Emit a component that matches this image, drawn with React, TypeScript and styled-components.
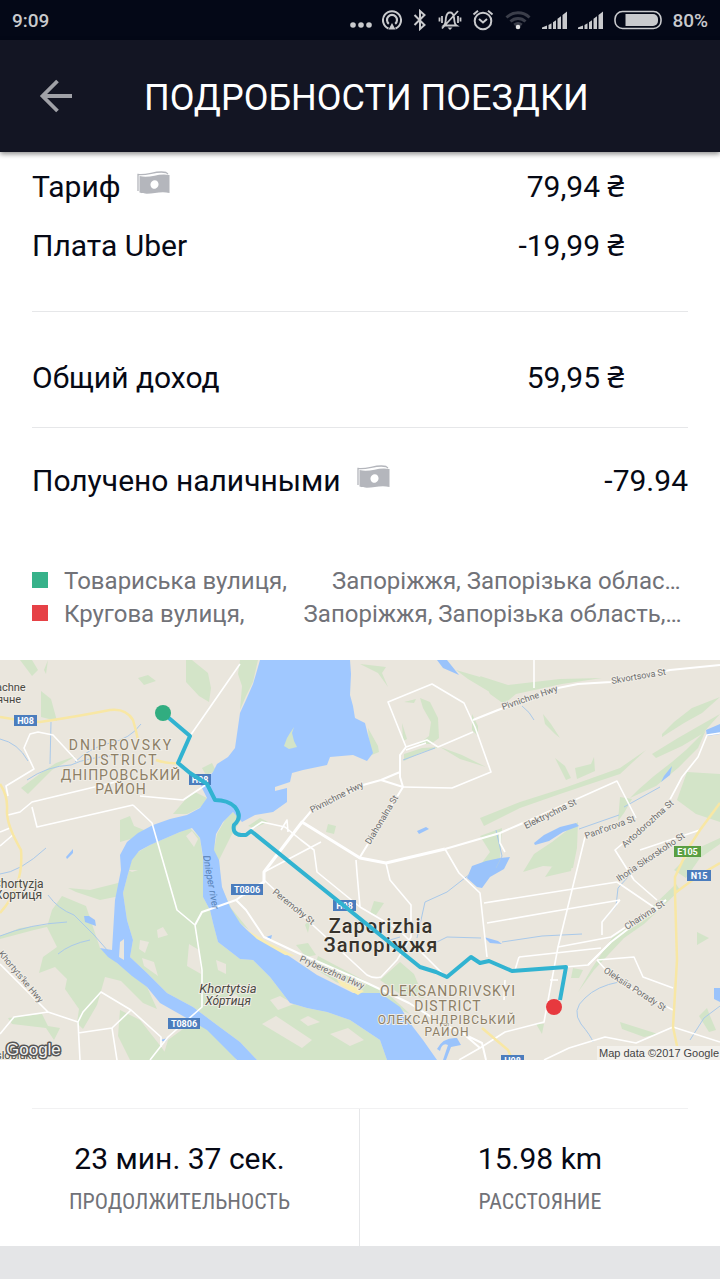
import React from 'react';
import styled, { createGlobalStyle } from 'styled-components';

const GlobalStyle = createGlobalStyle`
  *, *::before, *::after { box-sizing: border-box; }
  body {
    margin: 0;
    background: #fff;
    color: #060915;
    font-family: Roboto, "Noto Sans", sans-serif;
  }
`;

const Page = styled.div`
  display: flex;
  flex-direction: column;
`;

const StatusBar = styled.div`
  display: flex;
  align-items: center;
  justify-content: space-between;
  height: 40px;
  padding: 0 12px;
  background: #040817;
  color: #c9cacd;
  font-size: 19px;
  font-weight: 500;
`;

const StatusIcons = styled.div`
  display: flex;
  align-items: center;
  gap: 10px;
  svg { display: block; }
`;

const AppBar = styled.header`
  position: relative;
  display: flex;
  align-items: center;
  height: 112px;
  padding: 0 32px;
  background: #131523;
  color: #fff;
  box-shadow: 0 2px 5px rgba(0, 0, 0, 0.45);
`;

const BackButton = styled.button`
  display: flex;
  width: 48px;
  height: 48px;
  align-items: center;
  justify-content: center;
  padding: 0;
  border: 0;
  background: none;
  color: #a0a1a7;
`;

const Title = styled.h1`
  margin: 0 0 0 64px;
  padding-top: 4px;
  font-size: 36px;
  line-height: 48px;
  font-weight: 400;
`;

const Section = styled.section<{ $top: number; $bottom: number }>`
  display: flex;
  flex-direction: column;
  gap: 19px;
  margin: 0 32px;
  padding: ${(p) => p.$top}px 0 ${(p) => p.$bottom}px;
  & + & { border-top: 1px solid #e6e7e9; }
`;

const Row = styled.div`
  display: flex;
  align-items: center;
  justify-content: space-between;
  font-size: 30px;
  line-height: 40px;
`;

const RowLabel = styled.span`
  display: flex;
  align-items: center;
  gap: 16px;
  svg { margin-bottom: 8px; }
`;

const Amount = styled.span<{ $inset?: boolean }>`
  margin-right: ${(p) => (p.$inset ? 64 : 0)}px;
`;

const Currency = styled.span`
  font-family: "Noto Sans", sans-serif;
  line-height: 1;
`;

const Stops = styled.ul`
  display: flex;
  flex-direction: column;
  margin: 0 32px;
  padding: 0 0 29px;
  list-style: none;
`;

const Stop = styled.li<{ $color: string }>`
  display: flex;
  align-items: center;
  font-size: 24px;
  line-height: 33px;
  color: #717278;
  white-space: nowrap;
  &::before {
    content: "";
    width: 16px;
    height: 16px;
    margin: 0 16px 4px 0;
    background: ${(p) => p.$color};
  }
`;

const Street = styled.span<{ $gap: number }>`
  margin-right: ${(p) => p.$gap}px;
`;

const MapFigure = styled.figure`
  margin: 0;
  svg {
    display: block;
    width: 100%;
    height: auto;
  }
`;

const Divider = styled.hr`
  margin: 48px 32px 0;
  border: 0;
  border-top: 1px solid #f1f1f2;
`;

const Stats = styled.div`
  display: grid;
  grid-template-columns: 1fr 1fr;
`;

const Stat = styled.div`
  display: flex;
  flex-direction: column;
  align-items: center;
  height: 137px;
  padding-top: 30px;
  &:first-child { border-right: 1px solid #e6e7e9; }
`;

const StatValue = styled.span`
  font-size: 30px;
  line-height: 40px;
`;

const StatLabel = styled.span`
  font-family: "Roboto Condensed", Roboto, sans-serif;
  font-stretch: condensed;
  margin-top: 7px;
  font-size: 22px;
  line-height: 32px;
  color: #717278;
`;

const Footer = styled.footer`
  height: 33px;
  background: #e4e5e7;
`;

const MoreIcon = () => (
  <svg width="22" height="20" fill="#c9cacd"><circle cx="3" cy="15" r="2.8" /><circle cx="11" cy="15" r="2.8" /><circle cx="19" cy="15" r="2.8" /></svg>
);

const CastIcon = () => (
  <svg width="20" height="22" fill="none" stroke="#c9cacd" strokeWidth="2">
    <path d="M6.5 19.5A9 9 0 1 1 13.500 19.500" />
    <path d="M6.800 14.800A5 5 0 1 1 13.200 14.800" strokeWidth="2.200" />
    <path d="M10 14l3.500 6.500h-7z" fill="#c9cacd" stroke="none" />
  </svg>
);

const BluetoothIcon = () => (
  <svg width="16" height="22" fill="none" stroke="#c9cacd" strokeWidth="2"><path d="M2.500 6l10 10L8 20V2l4.500 4-10 10" /></svg>
);

const BellOffIcon = () => (
  <svg width="24" height="22" fill="none" stroke="#c9cacd" strokeWidth="1.800">
    <path d="M6 16.500c2-1.500 1.500-5 2-8C8.600 5 10 3.500 12 3.500s3.400 1.500 4 5c.5 3 0 6.500 2.500 8zM4 19.500L20 2M4 7v7M1.500 8.500v4M20 7v7M22.500 8.500v4" />
    <path d="M9.500 18.500h5l-2.500 2.500z" fill="#c9cacd" stroke="none" />
  </svg>
);

const AlarmIcon = () => (
  <svg width="22" height="22" fill="none" stroke="#c9cacd" strokeWidth="2">
    <circle cx="11" cy="12" r="8.300" />
    <path d="M7 10l4 3.500 4-3.500M1.500 5.500L6 1.800M20.500 5.500L16 1.800" />
  </svg>
);

const WifiIcon = () => (
  <svg width="28" height="22" fill="none" stroke="#3b3e4a" strokeWidth="3">
    <path d="M2.500 8.500a16.500 16.500 0 0 1 23 0M6.500 12.500a11 11 0 0 1 15 0M10.300 16a6 6 0 0 1 7.400 0" />
    <circle cx="14" cy="18" r="2.300" fill="#e0e0e2" stroke="none" />
  </svg>
);

const SignalIcon = () => (
  <svg width="26" height="22" fill="#c9cacd"><path d="M0 20v-1.500l5-2V20zM6.500 20v-4l3-1.800V20zM11 20v-6.800l3-2V20zM15.500 20V9.800l3.500-2.600V20zM20.500 20V6l4.500-3.500V20z" /></svg>
);

const BatteryIcon = () => (
  <svg width="48" height="20">
    <rect x="1" y="1.500" width="46" height="17" rx="7.500" fill="none" stroke="#c9cacd" strokeWidth="1.600" />
    <path d="M11.500 4H39a5 5 0 0 1 5 5v2a5 5 0 0 1-5 5H11.500z" fill="#c9cacd" />
  </svg>
);

const BackIcon = () => (
  <svg width="34" height="34" fill="none" stroke="currentColor" strokeWidth="3.800"><path d="M33 17H4M18.500 2L3.500 17l15 15" /></svg>
);

const CashIcon = () => (
  <svg width="33" height="24">
    <path d="M1 20V3.500C11 5 19-1 29 1.500l2 1.500" fill="none" stroke="#b4b6bc" strokeWidth="1.300" />
    <path d="M2.500 5C13 8 21 1.500 32.500 4v18C22 19 13 25 2.500 21.500z" fill="#b4b6bc" />
    <ellipse cx="17.500" cy="13.500" rx="4" ry="4.300" fill="#fff" transform="rotate(25 17.500 13.500)" />
  </svg>
);

type Shield = { x: number; y: number; w: number; label: string; color?: string };
const shields: Shield[] = [
  { x: 14, y: 55, w: 23, label: 'H08' },
  { x: 189, y: 114, w: 22, label: 'H08' },
  { x: 231, y: 224, w: 32, label: 'T0806' },
  { x: 333, y: 240, w: 23, label: 'H08' },
  { x: 168, y: 358, w: 32, label: 'T0806' },
  { x: 674, y: 186, w: 27, label: 'E105', color: '#5a9f43' },
  { x: 687, y: 210, w: 24, label: 'N15' },
  { x: 501, y: 395, w: 23, label: 'H08' },
];

type StreetLabel = { x: number; y: number; angle: number; name: string };
const streets: StreetLabel[] = [
  { x: 312, y: 153, angle: -27, name: 'Pivnichne Hwy' },
  { x: 370, y: 185, angle: -59, name: 'Diahonalna St' },
  { x: 503, y: 50, angle: -19, name: 'Pivnichne Hwy' },
  { x: 612, y: 24, angle: -10, name: 'Skvortsova St' },
  { x: 526, y: 169, angle: -26, name: 'Elektrychna St' },
  { x: 586, y: 179, angle: -20, name: "Panf'orova St" },
  { x: 625, y: 188, angle: -42, name: 'Avtodorozhna St' },
  { x: 619, y: 222, angle: -34, name: 'Ihoria Sikorskoho St' },
  { x: 627, y: 270, angle: -33, name: 'Charivna St' },
  { x: 272, y: 233, angle: 39, name: 'Peremohy St' },
  { x: 299, y: 301, angle: 24, name: 'Pryberezhna Hwy' },
  { x: -2, y: 294, angle: 50, name: "Khortyts'ke Hwy" },
  { x: 603, y: 312, angle: 33, name: 'Oleksiia Porady St' },
];

const RouteMap = () => (
  <svg viewBox="0 0 720 400" role="img" aria-label="Zaporizhia" fontFamily="Roboto, sans-serif">
    <rect width="720" height="400" fill="#eae6dd" />

    {/* parks and woodland */}
    <g fill="#d3e4c8">
      <path d="M186 0h6l16 13 3 15-2 14-10-6-13-14zM240 0h18l-5 22-7 14-6 14 2-24-4-12zM41 31l10 8 6 22-16-4zM138 18l10-3 8 6-12 4zM20 0h12l6 10-6 6zM44 10l4-10-2 14z" />
      <path d="M185 140l10-8 12 6-4 8-16 8-14 0zM120 160l10-4 4 10 10 4-10 8-14 4zM21 128l20-15 15-10 20-7-24 14-24 24zM202 108l10-5 4 8-10 4z" />
      <path d="M133 195L150 185 180 172 190 168 200 178 203 200V237L210 250 213 263 218 282 240 299 253 300 270 317 280 330 290 343 307 348 327 352 350 360 380 380 387 400H257L240 382 217 365 193 347 167 333 147 313 130 297 133 280 127 260 123 233z" />
      <path d="M52 250l10-14 24 10 14 42 17 15 30 24 10 22-14-6-22-22-16-4-8 28 -14 24-6-6 2-14-14-20 2-10-12-12-16 6 4-16 14-10-10-20z" />
      <path d="M68 228l22 2 32-8-2 14-20 4-24-8zM0 276l20-8 44-5-30 7-34 9z" />
      <path d="M213 195l4-21 8-14 8-8 8 8-10 16-12 24 2 26 10 22 18 22-16-12-14-24zM248 166l12-8 8 4-14 6z" />
      <path d="M8 358l34-4 6 12 12 2-6 12-8-12-34-4zM120 350l20 10 22 28 8 12h-40l-12-24zM168 380l30-22 32 20 6 22h-74z" />
      <path d="M318 296l34 18 34 18 24 22-34-14-40-18-22-14zM400 302l14 12 10 24-24-4-20-14zM296 285l12-2 8 12-10 2z" />
      <path d="M420 38l10 4 8 16 1 20-8 6-12 0 10-8 2-14-8-14zM404 42l12-3-2 4zM402 63l5 16-4 2zM368 68l10 18 1 6-12 5 2-12z" />
      <path d="M404 94l18-6 18-1-20 6-16 8zM440 87l22 8 24 12-26-8zM472 54l6 12 0 10-6-6zM456 10l24 7 28 10 0 8-20-4-20-12zM480 16l28 9 52-6 42-1-40 6-46 10-12 10-14-10zM360 4l26 3-4 6 6 14-10-14z" />
      <path d="M480 158l40-16 44-14 56-20 26-18-26 24-60 20-40 14-36 18zM575 108l16-4 3-7 1 14-18 8zM555 98l10 8 6 12-5 2zM543 54l8 10 9 14-5-4-10-10z" />
      <path d="M662 74l12-12 18-14 28-11-18 16-18 10-22 14zM652 94l26-16 42-24-18 20-20 12-26 12zM638 130l16-14 18-14 14-12 20-20-8 18-20 20-22 18-26 12zM687 112l33 2v48l-24-8-19-14z" />
      <path d="M534 194l18-12 26-20-1 26-4 20-30-2-20 6zM480 176l22-8-2 30-22 10 12-16zM620 137l12 2-8 14 -6 8zM553 205l20-8 -2 14-26 6z" />
      <path d="M674 210l20-20 26-12v6l-20 14-14 20zM578 332l14-24 20-30 24-16 40-38 4 6-36 34-20 14-30 32zM697 272l12 6-12 7zM620 362l38 12-14 3-22-8zM699 356l8-8 3 8 6 14-7 2z" />
      <path d="M374 241l10 2-8 12-6-2zM328 164l8 2-2 8-8-2zM573 308l10 2-4 8-8 0zM536 364l8 0-2 10zM305 265l6-8-3 16z" />
    </g>

    {/* settlement patches on the island */}
    <g fill="#eae6dd">
      <path d="M157 270l6-3 5 8-10 3zM140 280l9 2-4 11-6-4zM142 298l12 4 4 14-14-10zM189 284l10 6 2 24-14-8zM128 210l10 0-6 2zM186 176l6-5 6 8-4 8z" />
      <path d="M270 340l10-4 14 8-16 6zM262 364l14-8 36 24-10 8zM330 374l18-6 16 12-14 6zM222 338l14-4 6 8-20 4zM300 360l8-4 12 6-12 4zM216 300l10 4 0 10-8-4z" />
    </g>

    {/* river and reservoir */}
    <path
      fill="#a0c8ff"
      d="M260 0L256 14 253 24 246 40 240 53 237 74 235 88 228 97 217 104 213 112 206 120 200 124 207 138 200 148 187 155 170 159 153 165 138 173 127 182 120 195 121 210 115 240 112 290 100 288 108 297 117 303 132 316 147 327 160 343 190 360 207 370 227 390 237 400H257L240 382 217 365 193 347 167 333 147 313 130 297 133 280 127 260 123 233 128 214 132 200 139 191 150 185 180 172 192 168 200 178 203 197V237L210 250 213 263 218 282 240 299 253 300 270 317 280 330 290 343 307 348 327 352 350 360 380 380 387 400H437L423 380 413 367 400 347 380 333 353 333 317 315 280 290 260 280 247 270 240 263 230 247 222 227 219 200 214 190 216 174 223 162 233 152 242 162 255 155 273 152 287 142V128L275 131V127L290 122 292 113 303 110 327 105 330 97 353 95 367 101 373 93 368 75 365 63 355 58 353 46 350 35 351 14 350 0z"
    />
    <path fill="#eae6dd" d="M120 282l4-3v21l-5-3z" />
    <path fill="#d3e4c8" d="M284 86l3-8 3-5 4-6-2 6 2 8 3 6-8 2z" />
    <path fill="#f8edb5" d="M247 270l24 14 24 12-10-1-28-16zM336 318l28 13-6 4-18-10z" />
    <g fill="#9ac3fb">
      <path d="M467 218l5-12 14-5 14-3 10-1-6 12-14 8-8 11-5-1zM534 183l10-8 16-8 16-4 3 3-16 6-14 9-14 4zM437 0h10l12 15-16-7zM84 256l5 0 6 4 1 6-11-4zM706 70l14-6v10l-13 2z" />
      <path d="M664 116l8-10-2 9-9 7zM417 171l9-4 3 2-10 5zM484 277l14 4 4 3-12-1zM66 197l7-8v4l-6 6zM714 328h6v14l-6-3zM160 380l8-2-3 4zM266 277l6-2-1 4z" />
      <path d="M437 389q6-12 20-11l4 7-10 2-5 13h-3l5-15q-6-3-8 6z" />
    </g>
    <g fill="none" stroke="#a9c9ea" strokeWidth="1">
      <path d="M0 79q18 4 28 22M51 62l-1 42M75 102q14-14 35-19 20-4 31-19M27 120q20-14 44-15 16-8 50-10M0 276q30-12 67-14M58 294q12-10 32-14M48 235q10 14 26 20l20 20 14 16M0 214q20-2 46-26" />
      <path d="M403 100l32-12M417 278l8-36 22-10 23-18M390 280l10-3M437 282l10-5 34 1M502 282l40-6 40-2M579 169l40-14M624 147l36-20M602 262l14-16 2-18 20-22M593 382q-2-6-12-18-10-14 4-26 12-12 34-16M522 46q8 6 12 14" />
      <path d="M690 380l14-22 16-12M496 170l6 26-6 12" />
    </g>

    {/* minor roads */}
    <g fill="none" stroke="#fff" strokeWidth="1.600" strokeLinejoin="round">
      <path d="M240 4L190 76M77 101L53 75 38 72 30 74 24 88 34 109 6 126 8 136M8 155L20 152 32 142 132 118M32 147L37 167 133 145M140 136L183 140 207 124M133 145L152 163 177 250 195 265 202 310V347L168 377 150 400M0 172L10 168M0 186L14 174" />
      <path d="M0 374L14 357 48 352M0 304L48 352 78 362M80 400L78 362 83 352 101 332 131 350 161 377V387M78 373L112 368 131 350M112 368L117 400" />
      <path d="M250 170L262 162 285 167 301 180 314 190 317 212 360 247 399 270 445 316M281 170l6-10 1 12M264 212L321 182M264 220L367 315Q374 319 381 317L397 300 411 277V245L390 220 386 203M356 200L357 213 360 247" />
      <path d="M406 87L388 42 432 24 464 43 475 67 491 112 452 128 403 127M406 87L427 80 438 87 473 72M406 90L426 83M534 0V28M445 189L459 213 480 233 487 297M500 173V183L505 192" />
      <path d="M523 163L617 121 636 158M585 177L558 287 544 362 505 372 480 388 459 400M484 243L617 222M487 263L550 252 620 240M519 297L601 288M519 297L515 310M558 287L611 277 666 240M558 320h-8" />
      <path d="M720 73L707 75 698 97 682 117 666 147 615 190 634 220 657 240M700 170L640 190M565 307L588 305 611 282M597 300L634 297 643 317 673 328M597 300L615 320 673 350M673 367L636 383 605 377 569 388 544 400M720 382L673 367M602 275V262L612 250 620 240M617 222L658 250" />
      <path d="M505 320L504 340M509 352v12" />
    </g>

    {/* main roads */}
    <g fill="none" stroke="#fff" strokeLinejoin="round">
      <path d="M243 235L264 222V212L302 162 360 198 386 203 445 189" strokeWidth="3" />
      <path d="M302 162L312 150 363 125 381 120 400 112M381 120l22 7M445 189L500 173 523 163M360 197L403 127 400 117V95L406 87M473 60L498 50 558 28 578 24 611 22 670 10 720 5" strokeWidth="2" />
      <path d="M195 265L202 252 236 240 246 250 264 277 298 293 367 323 409 343 441 363 482 383 486 400M588 305L611 282 666 240M236 240L243 235M480 388l-14-12" strokeWidth="2" />
    </g>
    <g fill="none" stroke="#f8e7a4" strokeWidth="2.500">
      <path d="M0 57Q20 61 40 62 80 56 110 50 126 48 133 60 136 70 138 80M156 100Q166 104 179 103M0 124Q8 136 7 150 6 164 21 190 24 226 0 253" />
      <path d="M720 143L700 170 689 187 675 217V233L677 300 673 367 680 400M675 233L698 216 720 203M482 368l26 22 4 9" />
    </g>

    {shields.map((s) => (
      <g key={`${s.x}-${s.y}`}>
        <rect x={s.x} y={s.y} width={s.w} height="11" fill={s.color ?? '#4b7dbd'} />
        <text x={s.x + s.w / 2} y={s.y + 9} fontSize="9" fontWeight="700" fill="#fff" textAnchor="middle">{s.label}</text>
      </g>
    ))}

    <g fontSize="9" fill="#6e6e6e" stroke="#f0ede6" strokeWidth="2" paintOrder="stroke">
      {streets.map((s) => (
        <text key={`${s.x}-${s.y}`} transform={`translate(${s.x} ${s.y}) rotate(${s.angle})`}>{s.name}</text>
      ))}
    </g>
    <text transform="translate(203 196) rotate(80)" fontSize="10" fontStyle="italic" fill="#5580b5">Dnieper river</text>

    <g fill="#4b4a43" fontSize="12" stroke="#f0ede6" strokeWidth="2" paintOrder="stroke">
      <text x="-4" y="31" fontSize="11">achne</text>
      <text x="-3" y="43" fontSize="11">ячне</text>
      <text x="-7" y="228">Chortyzja</text>
      <text x="-5" y="239">Хортиця</text>
      <text x="-4" y="399" fontSize="11">slobluka</text>
      <g fontStyle="italic" textAnchor="middle">
        <text x="228" y="333" fontSize="13">Khortytsia</text>
        <text x="228" y="345">Хо́ртиця</text>
      </g>
    </g>

    <g fill="#8d7f66" textAnchor="middle" fontSize="14" letterSpacing="2" stroke="#f0ede6" strokeWidth="2" paintOrder="stroke">
      <text x="121" y="90">DNIPROVSKY</text>
      <text x="121" y="105">DISTRICT</text>
      <text x="121" y="120" letterSpacing="1">ДНІПРОВСЬКИЙ</text>
      <text x="121" y="134" letterSpacing="1">РАЙОН</text>
      <text x="448" y="336" letterSpacing="1">OLEKSANDRIVSKYI</text>
      <text x="448" y="351" letterSpacing="1">DISTRICT</text>
      <g fontSize="12" letterSpacing="1">
        <text x="447" y="364">ОЛЕКСАНДРІВСЬКИЙ</text>
        <text x="447" y="376">РАЙОН</text>
      </g>
    </g>

    <g fill="#37332c" textAnchor="middle" fontSize="20" letterSpacing="1" stroke="#f0ede6" strokeWidth="2" paintOrder="stroke">
      <text x="381" y="273" fontWeight="500">Zaporizhia</text>
      <text x="381" y="292" fontWeight="500">Запоріжжя</text>
    </g>

    {/* driven route with its two ends */}
    <path
      d="M163 53L190 76 178 103 190 113 207 124 215 140Q228 140 235 147 243 157 234 165 232 174 241 175L246 175 251 171 420 307 436 312 447 317 471 297 480 303 489 301 512 311 566 307 560 340"
      fill="none" stroke="#31b3d1" strokeWidth="4" strokeLinejoin="round"
    />
    <circle cx="163" cy="53" r="8" fill="#31ad80" />
    <circle cx="554" cy="347" r="8" fill="#e7393e" />

    <rect x="597" y="386" width="123" height="14" fill="#f3f1ec" />
    <text x="599" y="397" fontSize="11" fontFamily="'Liberation Sans', sans-serif" fill="#444">Map data ©2017 Google</text>
    <text x="6" y="395" fontSize="17" fontFamily="'Liberation Sans', sans-serif" fill="#f2f2f2" stroke="#555" strokeWidth="3" strokeLinejoin="round" paintOrder="stroke">Google</text>
  </svg>
);

export default function App() {
  return (
    <Page>
      <GlobalStyle />
      <StatusBar>
        <span>9:09</span>
        <StatusIcons>
          <MoreIcon />
          <CastIcon />
          <BluetoothIcon />
          <BellOffIcon />
          <AlarmIcon />
          <WifiIcon />
          <SignalIcon />
          <SignalIcon />
          <BatteryIcon />
          <span>80%</span>
        </StatusIcons>
      </StatusBar>
      <AppBar>
        <BackButton aria-label="Назад"><BackIcon /></BackButton>
        <Title>ПОДРОБНОСТИ ПОЕЗДКИ</Title>
      </AppBar>
      <main>
        <Section $top={15} $bottom={45}>
          <Row><RowLabel>Тариф <CashIcon /></RowLabel><Amount $inset>79,94 <Currency>₴</Currency></Amount></Row>
          <Row><RowLabel>Плата Uber</RowLabel><Amount $inset>-19,99 <Currency>₴</Currency></Amount></Row>
        </Section>
        <Section $top={46} $bottom={29}>
          <Row><RowLabel>Общий доход</RowLabel><Amount $inset>59,95 <Currency>₴</Currency></Amount></Row>
        </Section>
        <Section $top={33} $bottom={64}>
          <Row><RowLabel>Получено наличными <CashIcon /></RowLabel><Amount>-79.94</Amount></Row>
        </Section>
        <Stops>
          <Stop $color="#36b28a"><Street $gap={45}>Товариська вулиця,</Street>Запоріжжя, Запорізька облас…</Stop>
          <Stop $color="#e64146"><Street $gap={59}>Кругова вулиця,</Street>Запоріжжя, Запорізька область,…</Stop>
        </Stops>
        <MapFigure><RouteMap /></MapFigure>
        <Divider />
        <Stats>
          <Stat><StatValue>23 мин. 37 сек.</StatValue><StatLabel>ПРОДОЛЖИТЕЛЬНОСТЬ</StatLabel></Stat>
          <Stat><StatValue>15.98 km</StatValue><StatLabel>РАССТОЯНИЕ</StatLabel></Stat>
        </Stats>
      </main>
      <Footer />
    </Page>
  );
}
